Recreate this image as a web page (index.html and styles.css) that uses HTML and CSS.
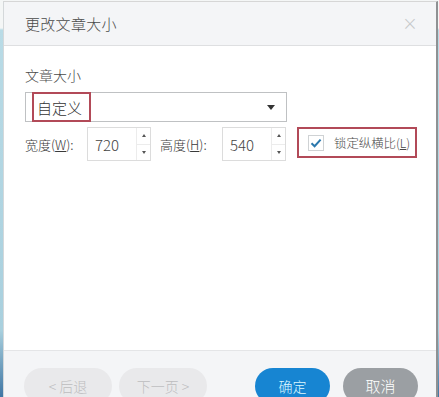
FILE: index.html
```html
<!DOCTYPE html>
<html lang="zh">
<head>
<meta charset="utf-8">
<link rel="stylesheet" href="styles.css">
</head>
<body>
<div class="page">
  <div class="dialog">
    <div class="header">
      <span class="title">更改文章大小</span>
      <span class="close">×</span>
    </div>
    <div class="content">
      <div class="label">文章大小</div>
      <div class="select">
        <span class="select-value">自定义</span>
        <span class="caret"></span>
      </div>
      <div class="row">
        <span class="field-label">宽度(<u>W</u>):</span>
        <div class="spin">
          <span class="spin-value">720</span>
          <div class="spin-btns"><span class="up"></span><span class="down"></span></div>
        </div>
        <span class="field-label second">高度(<u>H</u>):</span>
        <div class="spin">
          <span class="spin-value">540</span>
          <div class="spin-btns"><span class="up"></span><span class="down"></span></div>
        </div>
        <div class="lock">
          <span class="checkbox">
            <svg width="14" height="14" viewBox="0 0 14 14"><path d="M2.5 7.2 L5.6 10.2 L11.6 3.6" fill="none" stroke="#2b78ad" stroke-width="2"/></svg>
          </span>
          <span class="lock-text">锁定纵横比(<u>L</u>)</span>
        </div>
      </div>
    </div>
    <div class="footer">
      <button class="btn btn-disabled">&lt; 后退</button>
      <button class="btn btn-disabled">下一页 &gt;</button>
      <button class="btn btn-primary">确定</button>
      <button class="btn btn-cancel">取消</button>
    </div>
  </div>
</div>
</body>
</html>
```
FILE: styles.css
```css
html, body {
  margin: 0;
  padding: 0;
}
body {
  width: 439px;
  height: 397px;
  overflow: hidden;
  background: linear-gradient(to bottom, #f4f6f6 0px, #f4f6f6 28px, #b9dbe6 30px, #a9d0de 330px, #3f76a4 397px);
  font-family: "Noto Sans CJK SC", "Noto Sans", sans-serif;
  font-weight: 300;
}
.page {
  padding: 1px 0 0 3px;
  height: 396px;
  overflow: hidden;
}
.dialog {
  width: 432px;
  border-top: 1px solid #d6d6d6;
  border-left: 1px solid #d4d8da;
  border-right: 2px solid #8f9193;
  background: #fff;
  display: flex;
  flex-direction: column;
}
.header {
  height: 43px;
  background: #f4f5f7;
  border-bottom: 1px solid #dedfe1;
  display: flex;
  align-items: center;
  justify-content: space-between;
  padding: 0 18px 0 21px;
}
.title {
  font-size: 15px;
  color: #4a4a4a;
  letter-spacing: 0.3px;
}
.close {
  font-family: "DejaVu Sans", sans-serif;
  font-size: 19px;
  color: #c6c8ca;
  line-height: 1;
}
.content {
  height: 304px;
  padding: 19px 0 0 21px;
  box-sizing: border-box;
}
.label {
  font-size: 14px;
  line-height: 20px;
  color: #4a4a4a;
}
.select {
  margin-top: 7px;
  width: 262px;
  height: 30px;
  box-sizing: border-box;
  border: 1px solid #bfc1c3;
  display: flex;
  align-items: stretch;
  justify-content: space-between;
  padding: 0 11px 0 6px;
}
.select-value {
  border: 2px solid #b24a58;
  display: flex;
  align-items: center;
  padding: 0 7px 0 3px;
  margin: -1px 0;
  font-size: 15px;
  color: #333;
}
.caret {
  align-self: center;
  width: 0;
  height: 0;
  border-left: 4px solid transparent;
  border-right: 4px solid transparent;
  border-top: 5px solid #333;
}
.row {
  margin-top: 5px;
  display: flex;
  align-items: center;
}
.field-label {
  font-size: 13px;
  color: #3a3a3a;
  width: 62px;
}
.field-label.second {
  margin-left: 9px;
}
.spin {
  width: 64px;
  height: 34px;
  box-sizing: border-box;
  border: 1px solid #dcdcdc;
  display: flex;
  justify-content: space-between;
}
.spin-value {
  font-size: 15px;
  color: #444;
  display: flex;
  align-items: center;
  padding-left: 7px;
}
.spin-btns {
  width: 13px;
  display: flex;
  flex-direction: column;
  border-left: 1px solid #ececec;
}
.spin-btns span {
  flex: 1;
  display: flex;
  align-items: center;
  justify-content: center;
}
.spin-btns .up {
  border-bottom: 1px solid #ececec;
}
.spin-btns .up::after {
  content: "";
  border-left: 2.5px solid transparent;
  border-right: 2.5px solid transparent;
  border-bottom: 3px solid #555;
}
.spin-btns .down::after {
  content: "";
  border-left: 2.5px solid transparent;
  border-right: 2.5px solid transparent;
  border-top: 3px solid #555;
}
.lock {
  margin-left: 11px;
  width: 120px;
  height: 31px;
  box-sizing: border-box;
  border: 2px solid #b24a58;
  display: flex;
  align-items: center;
  padding-left: 9px;
  gap: 10px;
  align-self: flex-start;
}
.checkbox {
  width: 16px;
  height: 16px;
  box-sizing: border-box;
  border: 1px solid #cfd2d4;
  display: flex;
  align-items: center;
  justify-content: center;
  background: #fff;
}
.lock-text {
  font-size: 12.4px;
  color: #4a4a4a;
}
.footer {
  border-top: 1px solid #e4e5e7;
  background: #f4f5f7;
  height: 60px;
  display: flex;
  align-items: flex-start;
  padding: 17px 0 0 20px;
}
.btn {
  height: 36px;
  border: none;
  border-radius: 18px;
  font-family: "Noto Sans CJK SC", "Noto Sans", sans-serif;
  font-weight: 300;
  font-size: 14px;
  padding: 0;
  line-height: 34px;
}
.btn-disabled {
  width: 88px;
  background: #e9e9eb;
  color: #bdbdbf;
  margin-right: 7px;
}
.btn-primary {
  width: 75px;
  background: #1785d2;
  color: #def8ff;
  margin-left: 41px;
  margin-right: 13px;
}
.btn-cancel {
  width: 75px;
  background: #9b9fa3;
  color: #fff;
  font-size: 15px;
}
```
